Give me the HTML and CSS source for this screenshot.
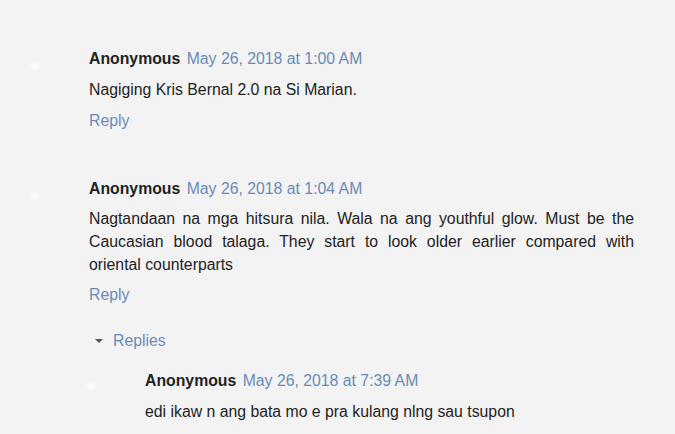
FILE: index.html
```html
<!DOCTYPE html>
<html>
<head>
<meta charset="utf-8">
<link rel="stylesheet" href="styles.css">
</head>
<body>
<div class="thread">
  <div class="comment c1">
    <div class="avatar"></div>
    <div class="content">
      <div class="head"><span class="name">Anonymous</span> <span class="date">May 26, 2018 at 1:00 AM</span></div>
      <p class="body">Nagiging Kris Bernal 2.0 na Si Marian.</p>
      <div class="reply">Reply</div>
    </div>
  </div>
  <div class="comment c2">
    <div class="avatar"></div>
    <div class="content">
      <div class="head"><span class="name">Anonymous</span> <span class="date">May 26, 2018 at 1:04 AM</span></div>
      <p class="body">Nagtandaan na mga hitsura nila. Wala na ang youthful glow. Must be the Caucasian blood talaga. They start to look older earlier compared with oriental counterparts</p>
      <div class="reply">Reply</div>
      <div class="toggle"><span class="tri"></span><span class="replies">Replies</span></div>
      <div class="comment nested">
        <div class="avatar"></div>
        <div class="content">
          <div class="head"><span class="name">Anonymous</span> <span class="date">May 26, 2018 at 7:39 AM</span></div>
          <p class="body">edi ikaw n ang bata mo e pra kulang nlng sau tsupon</p>
        </div>
      </div>
    </div>
  </div>
</div>
</body>
</html>
```
FILE: styles.css
```css
html, body {
  margin: 0;
  padding: 0;
  background: #f3f3f3;
  font-family: "Liberation Sans", Arial, sans-serif;
  font-size: 15.8px;
  color: #222;
}
.thread {
  padding: 48px 0 0 30px;
}
.comment {
  display: flex;
}
.c2 {
  margin-top: 46px;
}
.avatar {
  width: 10px;
  height: 10px;
  margin-top: 13px;
  margin-right: 49px;
  border-radius: 50%;
  background: radial-gradient(circle, #fdfdfd 0%, #f8f8f8 45%, rgba(243,243,243,0) 100%);
  flex: none;
}
.content {
  width: 545px;
}
.head {
  line-height: 22px;
}
.name {
  font-weight: bold;
  color: #222;
}
.date {
  color: #6a8bb5;
  margin-left: 2px;
}
.body {
  margin: 8px 0 0;
  line-height: 23px;
  text-align: justify;
}
.c2 > .content > .body {
  margin-top: 7px;
}
.reply {
  color: #6a8bb5;
  margin-top: 9px;
  line-height: 22px;
}
.c2 > .content > .reply {
  margin-top: 8px;
}
.toggle {
  margin-top: 24px;
  line-height: 22px;
  display: flex;
  align-items: center;
}
.tri {
  width: 0;
  height: 0;
  border-left: 4px solid transparent;
  border-right: 4px solid transparent;
  border-top: 4px solid #555;
  margin: 0 10px 0 6px;
}
.replies {
  color: #6a8bb5;
}
.nested {
  margin-top: 18px;
  margin-left: -3px;
}
.nested .avatar {
  margin-top: 11px;
}
.nested .content {
  width: 480px;
}
.nested .body {
  margin-top: 8px;
}
```
